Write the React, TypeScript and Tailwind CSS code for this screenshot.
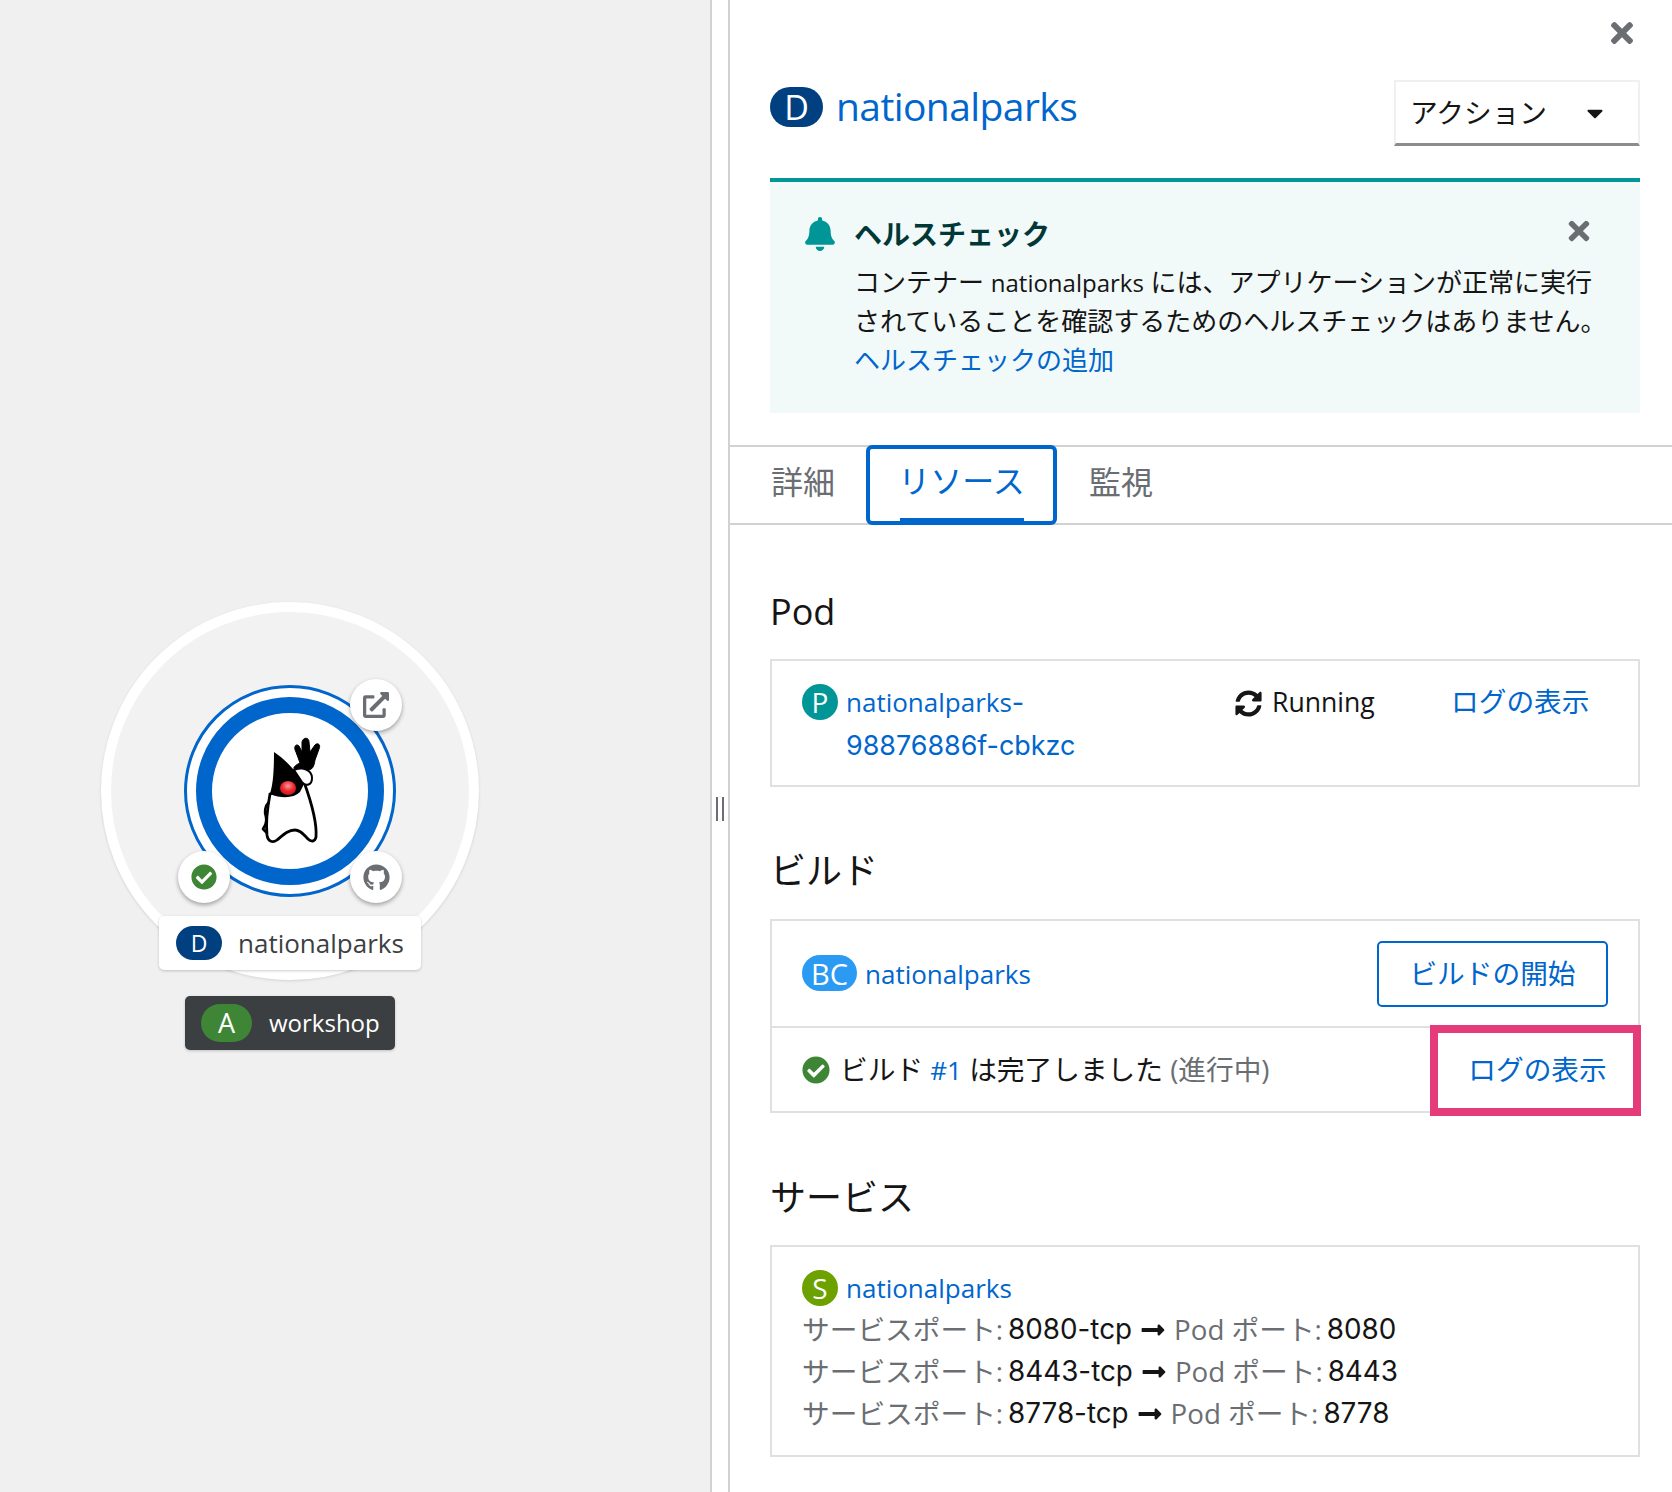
import React from 'react';
import { FaBell, FaCaretDown, FaCheckCircle, FaExternalLinkAlt, FaGithub, FaLongArrowAltRight, FaSyncAlt, FaTimes } from 'react-icons/fa';

const Duke = () => (
    <svg viewBox="0 0 130 130" className="w-[130px] h-[130px]">
        <defs>
            <radialGradient id="nose" cx="50%" cy="35%" r="65%">
                <stop offset="0%" stopColor="#ff9a9a" />
                <stop offset="55%" stopColor="#ee2a30" />
                <stop offset="100%" stopColor="#c8141c" />
            </radialGradient>
        </defs>
        {/* body */}
        <path d="M40 72 C37 88 36 104 37 113 C38 120 43 121 47 118 C53 113 58 108 65 108 C71 108 74 113 78 117 C81 120 85 120 86 115 C87 102 82 82 74 60 Z" fill="#fff" stroke="#000" strokeWidth="2.8" />
        {/* left arm */}
        <path d="M39 80 C35 84 34 90 36 95 C37 100 35 104 33 107 L37 111" fill="none" stroke="#000" strokeWidth="2.6" strokeLinejoin="round" />
        {/* head */}
        <path d="M44 30 C56 38 67 50 74 62 L70 70 C64 76 52 77 40 72 C43 62 44 50 44 30 Z" fill="#000" />
        <ellipse cx="58" cy="66" rx="8" ry="7" fill="url(#nose)" />
        {/* wrist */}
        <path d="M64 48 C72 44 82 48 82 56 C82 63 76 65 72 60 Z" fill="#fff" stroke="#000" strokeWidth="2" />
        {/* hand */}
        <path d="M66 30 C63 25 66 21 69 24 L72 30 L72 20 C73 15 79 15 79 20 L80 30 L85 23 C88 20 91 23 89 27 L85 38 C84 45 82 48 78 48 C74 46 69 47 65 47 C62 47 65 43 70 41 C69 37 67 34 66 30 Z" fill="#000" stroke="#000" strokeWidth="1" strokeLinejoin="round" />
    </svg>
);

const NodeBadge: React.FC<{ className: string; children: React.ReactNode }> = ({ className, children }) => (
    <div className={`absolute w-[52px] h-[52px] rounded-full bg-white shadow-[0_2px_4px_rgba(0,0,0,0.35)] flex items-center justify-center ${className}`}>
        {children}
    </div>
);

const Heading: React.FC<{ className?: string; children: React.ReactNode }> = ({ className, children }) => (
    <h2 className={`h-[40px] text-[36px] leading-[40px] text-[#151515] whitespace-nowrap ${className || ''}`}>{children}</h2>
);

const Link: React.FC<{ className?: string; children: React.ReactNode }> = ({ className, children }) => (
    <a className={`text-[#0066cc] ${className || ''}`}>{children}</a>
);

// latin names run a little smaller than the japanese text around them
const Name: React.FC<{ children: React.ReactNode }> = ({ children }) => (
    <span className="text-[26px]">{children}</span>
);

const Num: React.FC<{ children: React.ReactNode }> = ({ children }) => (
    <span className="font-['Inter',sans-serif] text-[26.9px]">{children}</span>
);

const PortNum: React.FC<{ children: React.ReactNode }> = ({ children }) => (
    <span className="ml-[5px] text-[#151515] font-['Inter',sans-serif] text-[27.8px]">{children}</span>
);

const Port: React.FC<{ svc: string; pod: string }> = ({ svc, pod }) => (
    <div className="flex items-center h-[42px] whitespace-nowrap">
        <span className="text-[#6a6e73]">サービスポート:</span>
        <PortNum>{svc}</PortNum>
        <FaLongArrowAltRight className="mx-2 text-[#151515] text-[26px]" />
        <span className="text-[#6a6e73]">Pod ポート:</span>
        <PortNum>{pod}</PortNum>
    </div>
);

export default function App() {
    return (
        <div className="w-[1672px] h-[1492px] flex bg-white overflow-hidden font-['Open_Sans','Noto_Sans_CJK_JP',sans-serif] text-[27.7px] text-[#151515]">
            {/* topology canvas */}
            <div className="relative w-[710px] h-full shrink-0 bg-[#f0f0f0]">
                <div className="absolute left-[101px] top-[602px] w-[378px] h-[378px] rounded-full bg-[#f2f2f2] border-[10px] border-white shadow-[0_1px_3px_rgba(0,0,0,0.12)]" />
                <div className="absolute left-[184px] top-[685px] w-[212px] h-[212px] rounded-full bg-white border-[3px] border-[#0066cc] flex items-center justify-center">
                    <div className="w-[188px] h-[188px] rounded-full bg-white border-[16px] border-[#0066cc]" />
                </div>
                <div className="absolute left-[230px] top-[722px]">
                    <Duke />
                </div>
                <NodeBadge className="left-[350px] top-[679px]">
                    <FaExternalLinkAlt className="text-[26px] text-[#6a6e73]" />
                </NodeBadge>
                <NodeBadge className="left-[178px] top-[851px]">
                    <FaCheckCircle className="text-[26px] text-[#3e8635]" />
                </NodeBadge>
                <NodeBadge className="left-[350px] top-[851px]">
                    <FaGithub className="text-[27px] text-[#6a6e73]" />
                </NodeBadge>
                <div className="absolute left-[159px] top-[916px] w-[262px] h-[54px] rounded-[5px] bg-white shadow-[0_1px_3px_rgba(0,0,0,0.2)] flex items-center pl-[17px]">
                    <span className="w-[46px] h-[34px] rounded-full bg-[#004080] text-white text-[23px] flex items-center justify-center">D</span>
                    <span className="ml-[16px] text-[26px] text-[#3c3f42]">nationalparks</span>
                </div>
                <div className="absolute left-[185px] top-[996px] w-[210px] h-[54px] rounded-[5px] bg-[#3c3f42] shadow-[0_1px_3px_rgba(0,0,0,0.2)] flex items-center pl-[16px]">
                    <span className="w-[51px] h-[38px] rounded-full bg-[#3e8635] text-white text-[27px] flex items-center justify-center">A</span>
                    <span className="ml-[17px] text-[24px] text-white">workshop</span>
                </div>
            </div>

            {/* resize gutter */}
            <div className="relative w-[20px] h-full shrink-0 bg-white border-x-2 border-[#d2d2d2]">
                <div className="absolute left-[4px] top-[797px] w-[8px] h-[24px] border-x-2 border-[#6a6e73]" />
            </div>

            {/* side panel */}
            <div className="flex-1 min-w-0">
                <div className="flex justify-end h-[46px] pt-[17px] pr-[34px]">
                    <FaTimes className="text-[32px] text-[#6a6e73]" />
                </div>
                <div className="px-[40px] pr-[32px]">
                    <div className="flex items-center justify-between h-[66px] mt-[34px]">
                        <div className="flex items-center -mt-[12px]">
                            <span className="w-[53px] h-[40px] rounded-full bg-[#004080] text-white text-[34px] font-medium flex items-center justify-center">D</span>
                            <span className="ml-[13px] -mt-[3px] text-[39px] leading-[48px] font-medium tracking-[-0.015em] text-[#0066cc]">nationalparks</span>
                        </div>
                        <div className="w-[246px] h-[66px] border-2 border-[#f0f0f0] border-b-[3px] border-b-[#8a8d90] flex items-center justify-between pl-[14px] pr-[30px]">
                            <span>アクション</span>
                            <FaCaretDown className="text-[26px]" />
                        </div>
                    </div>

                    <div className="relative mt-[32px] h-[235px] bg-[#f2f9f9] border-t-4 border-[#009596] pl-[85px] pt-[32px] text-[26px]">
                        <FaBell className="absolute left-[33px] top-[35px] text-[34px] text-[#009596]" />
                        <FaTimes className="absolute right-[46px] top-[34px] text-[30px] text-[#6a6e73]" />
                        <div className="text-[28px] leading-[40px] font-bold text-[#003737] -ml-[1px]">ヘルスチェック</div>
                        <div className="mt-[9px] -ml-[1px] leading-[39px] whitespace-nowrap">
                            <div>コンテナー <span className="text-[24px]">nationalparks</span> には、アプリケーションが正常に実行</div>
                            <div>されていることを確認するためのヘルスチェックはありません。</div>
                            <Link>ヘルスチェックの追加</Link>
                        </div>
                    </div>
                </div>

                <div className="mt-[32px] h-[80px] border-y-2 border-[#d2d2d2] flex pl-[41px] text-[32px] text-[#6a6e73]">
                    <div className="w-[95px] flex items-center -mt-[7px]">詳細</div>
                    <div className="relative -my-[2px] w-[191px] rounded-[6px] border-4 border-[#0066cc] flex items-center justify-center text-[#0066cc] bg-white">
                        <span className="-mt-[9px]">リソース</span>
                        <div className="absolute bottom-0 left-[30px] w-[124px] h-[3px] bg-[#0066cc]" />
                    </div>
                    <div className="ml-[32px] flex items-center -mt-[7px]">監視</div>
                </div>

                <div className="px-[40px] pr-[32px]">
                    <Heading className="mt-[67px] font-medium">Pod</Heading>
                    <div className="mt-[27px] h-[128px] border-2 border-[#e0e0e0] pl-[30px] pt-[23px]">
                        <div className="grid grid-cols-[433px_216px_1fr] leading-[42px]">
                            <div className="flex">
                                <span className="w-[36px] h-[36px] rounded-full bg-[#009596] text-white text-[28px] flex items-center justify-center shrink-0">P</span>
                                <Link className="ml-2 -mt-[4px] whitespace-nowrap"><Name>nationalparks</Name><Num>-</Num><br /><Num>98876886f-cbkzc</Num></Link>
                            </div>
                            <div className="flex items-start -mt-[3px]">
                                <FaSyncAlt className="text-[27px] mt-[9px]" />
                                <span className="ml-[10px] text-[26.6px]">Running</span>
                            </div>
                            <Link className="-mt-[4px]">ログの表示</Link>
                        </div>
                    </div>

                    <Heading className="mt-[64px]">ビルド</Heading>
                    <div className="relative mt-[28px] h-[194px] border-2 border-[#e0e0e0]">
                        <div className="h-[107px] border-b-2 border-[#e0e0e0] flex items-center justify-between pl-[30px] pr-[30px]">
                            <div className="flex items-center">
                                <span className="w-[55px] h-[36px] rounded-full bg-[#2b9af3] text-white text-[29px] flex items-center justify-center">BC</span>
                                <Link className="ml-2"><Name>nationalparks</Name></Link>
                            </div>
                            <div className="w-[231px] h-[66px] rounded-[5px] border-2 border-[#0066cc] text-[#0066cc] flex items-center justify-center">ビルドの開始</div>
                        </div>
                        <div className="h-[83px] flex items-center pl-[30px]">
                            <FaCheckCircle className="text-[28px] text-[#3e8635]" />
                            <span className="ml-[10px]">ビルド <Link><Name>#1</Name></Link> は完了しました <span className="text-[#6a6e73]">(進行中)</span></span>
                        </div>
                        {/* annotation around the log link */}
                        <div className="absolute right-[-3px] top-[104px] w-[211px] h-[91px] border-[8px] border-[#e63b7a] flex items-center justify-center pl-[4px]">
                            <Link className="-mt-[2px]">ログの表示</Link>
                        </div>
                    </div>

                    <Heading className="mt-[65px]">サービス</Heading>
                    <div className="mt-[27px] h-[212px] border-2 border-[#e0e0e0] pl-[30px] pt-[20px]">
                        <div className="flex items-center h-[42px]">
                            <span className="w-[36px] h-[36px] rounded-full bg-[#6ca100] text-white text-[28px] flex items-center justify-center">S</span>
                            <Link className="ml-2"><Name>nationalparks</Name></Link>
                        </div>
                        <Port svc="8080-tcp" pod="8080" />
                        <Port svc="8443-tcp" pod="8443" />
                        <Port svc="8778-tcp" pod="8778" />
                    </div>
                </div>
            </div>
        </div>
    );
}
